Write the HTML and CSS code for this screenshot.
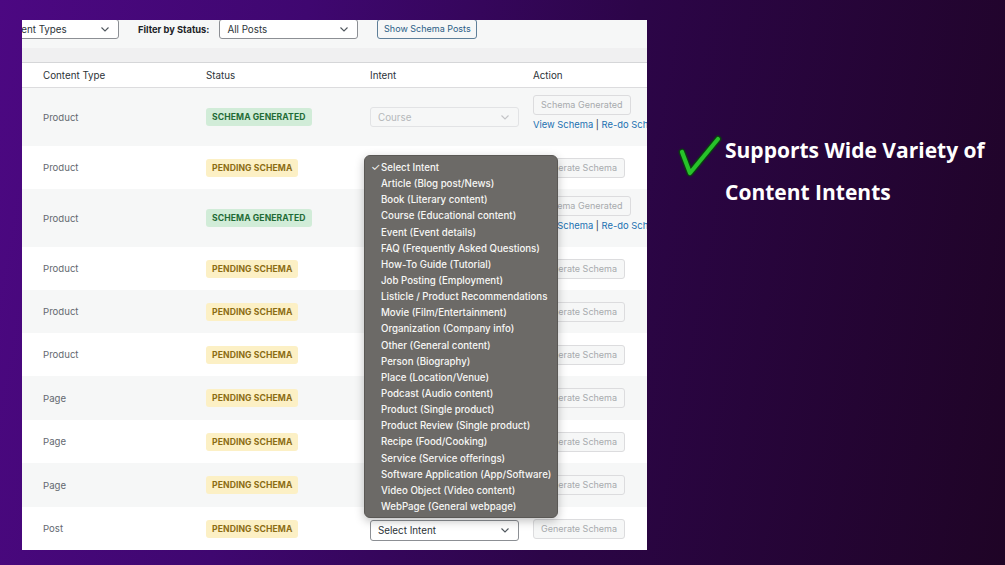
FILE: index.html
```html
<!DOCTYPE html>
<html lang="en">
<head>
<meta charset="utf-8">
<title>Schema Intents</title>
<link rel="stylesheet" href="styles.css">
</head>
<body>
<div class="stage">
  <div class="panel">
    <div class="toolbar">
      <div class="filters">
        <div class="select sel-type"><span>All Content Types</span><svg class="chev" viewBox="0 0 8 5" width="8" height="5"><path d="M0.5 0.5 L4 4 L7.5 0.5" fill="none" stroke="#50575e" stroke-width="1.1"/></svg></div>
        <span class="flabel">Filter by Status:</span>
        <div class="select sel-status"><span>All Posts</span><svg class="chev" viewBox="0 0 8 5" width="8" height="5"><path d="M0.5 0.5 L4 4 L7.5 0.5" fill="none" stroke="#50575e" stroke-width="1.1"/></svg></div>
        <div class="btn-show">Show Schema Posts</div>
      </div>
    </div>
    <div class="band"></div>
    <div class="thead">
      <span>Content Type</span><span>Status</span><span>Intent</span><span>Action</span>
    </div>

    <div class="row tall alt">
      <span class="ctype">Product</span>
      <span><span class="badge ok">Schema Generated</span></span>
      <div class="select disabled"><span>Course</span><svg class="chev" viewBox="0 0 8 5" width="8" height="5"><path d="M0.5 0.5 L4 4 L7.5 0.5" fill="none" stroke="#c3c4c7" stroke-width="1.1"/></svg></div>
      <div class="actions">
        <span class="btn-off">Schema Generated</span>
        <span class="links"><span class="lnk">View Schema</span> | <span class="lnk">Re-do Schema</span></span>
      </div>
    </div>
    <div class="row">
      <span class="ctype">Product</span>
      <span><span class="badge pend">Pending Schema</span></span>
      <span></span>
      <span class="btn-off">Generate Schema</span>
    </div>
    <div class="row tall alt">
      <span class="ctype">Product</span>
      <span><span class="badge ok">Schema Generated</span></span>
      <span></span>
      <div class="actions">
        <span class="btn-off">Schema Generated</span>
        <span class="links"><span class="lnk">View Schema</span> | <span class="lnk">Re-do Schema</span></span>
      </div>
    </div>
    <div class="row">
      <span class="ctype">Product</span>
      <span><span class="badge pend">Pending Schema</span></span>
      <span></span>
      <span class="btn-off">Generate Schema</span>
    </div>
    <div class="row alt">
      <span class="ctype">Product</span>
      <span><span class="badge pend">Pending Schema</span></span>
      <span></span>
      <span class="btn-off">Generate Schema</span>
    </div>
    <div class="row">
      <span class="ctype">Product</span>
      <span><span class="badge pend">Pending Schema</span></span>
      <span></span>
      <span class="btn-off">Generate Schema</span>
    </div>
    <div class="row alt h44">
      <span class="ctype">Page</span>
      <span><span class="badge pend">Pending Schema</span></span>
      <span></span>
      <span class="btn-off">Generate Schema</span>
    </div>
    <div class="row">
      <span class="ctype">Page</span>
      <span><span class="badge pend">Pending Schema</span></span>
      <span></span>
      <span class="btn-off">Generate Schema</span>
    </div>
    <div class="row alt h44">
      <span class="ctype">Page</span>
      <span><span class="badge pend">Pending Schema</span></span>
      <span></span>
      <span class="btn-off">Generate Schema</span>
    </div>
    <div class="row">
      <span class="ctype">Post</span>
      <span><span class="badge pend">Pending Schema</span></span>
      <div class="select active"><span>Select Intent</span><svg class="chev" viewBox="0 0 8 5" width="8" height="5"><path d="M0.5 0.5 L4 4 L7.5 0.5" fill="none" stroke="#50575e" stroke-width="1.1"/></svg></div>
      <span class="btn-off">Generate Schema</span>
    </div>

    <ul class="menu">
      <li class="checked"><span class="tick">✓</span>Select Intent</li>
      <li>Article (Blog post/News)</li>
      <li>Book (Literary content)</li>
      <li>Course (Educational content)</li>
      <li>Event (Event details)</li>
      <li>FAQ (Frequently Asked Questions)</li>
      <li>How-To Guide (Tutorial)</li>
      <li>Job Posting (Employment)</li>
      <li>Listicle / Product Recommendations</li>
      <li>Movie (Film/Entertainment)</li>
      <li>Organization (Company info)</li>
      <li>Other (General content)</li>
      <li>Person (Biography)</li>
      <li>Place (Location/Venue)</li>
      <li>Podcast (Audio content)</li>
      <li>Product (Single product)</li>
      <li>Product Review (Single product)</li>
      <li>Recipe (Food/Cooking)</li>
      <li>Service (Service offerings)</li>
      <li>Software Application (App/Software)</li>
      <li>Video Object (Video content)</li>
      <li>WebPage (General webpage)</li>
    </ul>
  </div>

  <div class="caption">
    <svg class="check" viewBox="0 0 44 42" width="44" height="42">
      <path d="M4 17 L12 38 L40 4" fill="none" stroke="#0b3d12" stroke-width="7" stroke-linecap="round" stroke-linejoin="round"/>
      <path d="M4 17 L12 38 L40 4" fill="none" stroke="#27c22a" stroke-width="4.2" stroke-linecap="round" stroke-linejoin="round"/>
    </svg>
    <p class="cap-text">Supports Wide Variety of<br>Content Intents</p>
  </div>
</div>
</body>
</html>
```

FILE: styles.css
```css
html, body {
  margin: 0;
  padding: 0;
}
body {
  width: 1005px;
  height: 565px;
  overflow: hidden;
  background: linear-gradient(100deg, #4c0882 0%, #3f0770 28%, #2c0548 58%, #1f0426 100%);
  font-family: "Inter", "Liberation Sans", sans-serif;
}
.stage {
  display: flex;
  align-items: flex-start;
  padding: 20px 0 0 22px;
}
.panel {
  position: relative;
  width: 625px;
  height: 530px;
  background: #fff;
  overflow: hidden;
  font-size: 9.7px;
  color: #3c434a;
}
.toolbar {
  height: 29px;
  background: #f6f7f7;
}
.filters {
  display: flex;
  align-items: center;
  margin: -1px 0 0 -44px;
}
.select {
  box-sizing: border-box;
  display: flex;
  align-items: center;
  justify-content: space-between;
  height: 20px;
  padding: 0 9px 0 7px;
  background: #fff;
  border: 1px solid #8c8f94;
  border-radius: 3px;
  color: #2c3338;
  font-size: 9.8px;
}
.chev { flex: none; }
.sel-type {
  width: 141px;
  padding-left: 6px;
}
.flabel {
  margin-left: 19px;
  font-weight: 700;
  color: #1d2327;
  font-size: 9.3px;
}
.sel-status {
  width: 139px;
  margin-left: 10px;
}
.btn-show {
  box-sizing: border-box;
  margin-left: 19px;
  width: 100px;
  height: 20px;
  line-height: 18px;
  text-align: center;
  border: 1px solid #5f7f99;
  border-radius: 3px;
  background: #f6f7f7;
  color: #2a5d86;
  font-size: 9px;
}
.band {
  height: 14px;
  background: #f0f0f1;
  border-bottom: 1px solid #d5d6d8;
}
.thead, .row {
  display: grid;
  grid-template-columns: 163px 164px 163px 1fr;
  align-items: center;
  padding-left: 21px;
}
.thead {
  height: 24px;
  border-bottom: 1px solid #dcdcde;
  font-size: 9.8px;
  color: #2c3338;
}
.row {
  height: 43px;
  background: #fff;
}
.row.alt { background: #f6f7f7; }
.row.tall { height: 58px; }
.row.h44 { height: 44px; }
.ctype {
  color: #646970;
  font-size: 9.6px;
}
.badge {
  display: inline-block;
  height: 18px;
  line-height: 18px;
  padding: 0 6px;
  border-radius: 3px;
  font-size: 8.6px;
  font-weight: 700;
  letter-spacing: 0.1px;
  text-transform: uppercase;
}
.badge.ok {
  background: #d1ecd8;
  color: #1f6b36;
}
.badge.pend {
  background: #fcf0c5;
  color: #8b6c13;
}
.select.disabled {
  width: 149px;
  background: #f6f7f7;
  border-color: #e2e3e5;
  color: #b5b7ba;
}
.select.active {
  width: 149px;
  height: 21px;
  margin-top: 3px;
}
.btn-off {
  box-sizing: border-box;
  justify-self: start;
  height: 20px;
  line-height: 18px;
  padding: 0 7px;
  border: 1px solid #dcdcde;
  border-radius: 3px;
  background: #f6f7f7;
  color: #a7aaad;
  font-size: 9px;
  white-space: nowrap;
}
.actions {
  align-self: start;
  display: flex;
  flex-direction: column;
  align-items: flex-start;
  gap: 3px;
  padding-top: 7px;
  white-space: nowrap;
}
.links {
  font-size: 9.4px;
  line-height: 14px;
  color: #2c3338;
}
.lnk { color: #2271b1; }
.menu {
  position: absolute;
  left: 342px;
  top: 135px;
  box-sizing: border-box;
  width: 194px;
  height: 363px;
  margin: 0;
  padding: 4px 0 0 16px;
  list-style: none;
  background: #6c6a67;
  border: 1px solid #5a5855;
  border-radius: 6px;
  box-shadow: 0 3px 10px rgba(0, 0, 0, 0.25);
  color: #f7f7f5;
  font-size: 9.7px;
  font-weight: 500;
}
.menu li {
  position: relative;
  height: 16.15px;
  line-height: 16.15px;
  white-space: nowrap;
}
.tick {
  position: absolute;
  left: -10px;
  font-size: 10.5px;
  font-weight: 400;
}
.caption {
  display: flex;
  align-items: flex-start;
  margin-left: 31px;
  padding-top: 115px;
}
.check {
  flex: none;
  margin-top: 0;
}
.cap-text {
  margin: -6px 0 0 3px;
  color: #fff;
  font-family: "Open Sans", "Liberation Sans", sans-serif;
  font-weight: 700;
  font-size: 21px;
  line-height: 42px;
}
```
